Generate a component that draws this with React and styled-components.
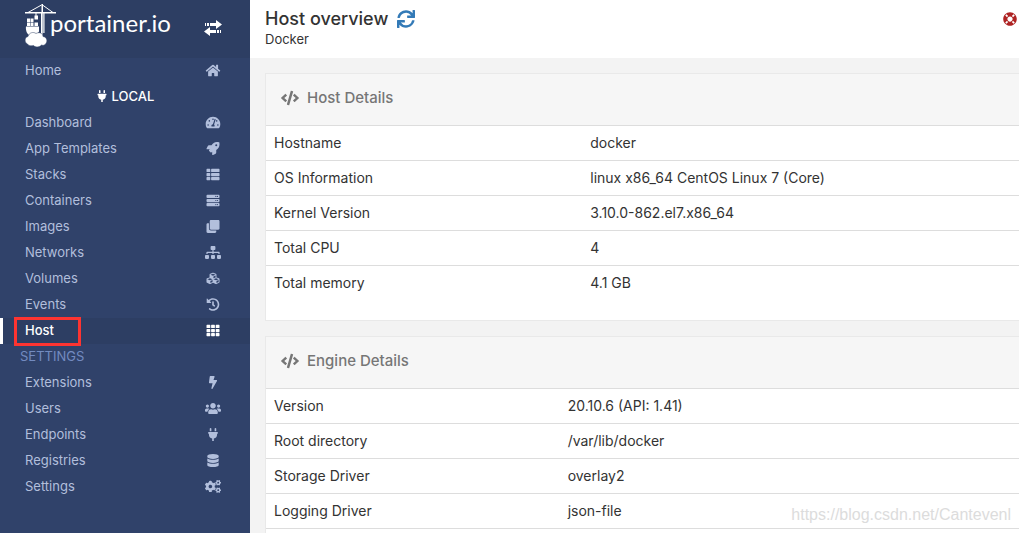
import styled, { createGlobalStyle, css } from 'styled-components'
import {
    FaHome, FaTachometerAlt, FaRocket, FaThList, FaServer, FaClone, FaSitemap, FaCubes, FaHistory,
    FaTh, FaBolt, FaUsers, FaPlug, FaDatabase, FaCogs, FaSync, FaLifeRing, FaCode,
} from 'react-icons/fa'

const GlobalStyle = createGlobalStyle`
    * {
        box-sizing: border-box;
    }
    body {
        margin: 0;
        background-color: #f3f3f3;
        color: #333333;
        font-family: Inter, "Liberation Sans", sans-serif;
        font-size: 13px;
        line-height: 18px;
    }
`

const Page = styled.div`
    display: flex;
    height: 100vh;
    overflow: hidden;
`

const Sidebar = styled.nav`
    flex: 0 0 250px;
    background-color: #30426a;
`

const SidebarHeader = styled.div`
    display: flex;
    align-items: flex-start;
    justify-content: space-between;
    height: 58px;
    padding: 4px 28px 0 25px;
    background-color: #2d3e63;
`

const LogoLink = styled.a`
    display: flex;
    color: white;
    text-decoration: none;
`

const LogoText = styled.span`
    margin-left: -7px;
    font-family: Lato, sans-serif;
    font-size: 24px;
    line-height: 38px;
`

const ToggleButton = styled.button`
    display: flex;
    margin-top: 16px;
    padding: 0;
    border: none;
    background: none;
    color: white;
    cursor: pointer;
`

const Menu = styled.ul`
    margin: 0;
    padding: 0;
    list-style: none;
`

const MenuLink = styled.a`
    display: flex;
    align-items: center;
    justify-content: space-between;
    height: 26px;
    padding: 0 28px 2px 22px;
    border-left: 3px solid transparent;
    color: #b2bfdc;
    text-decoration: none;
    ${({ $active }) => $active && css`
        border-left-color: white;
        background-color: #2d3e63;
        color: white;
        font-weight: 500;
    `}
`

const MenuIcon = styled.span`
    display: flex;
    justify-content: center;
    width: 18px;

    svg {
        width: 16px;
        height: 13px;
    }
`

const Marker = styled.span`
    margin: 3px 0 0 -11px;
    padding: 1px 24px 4px 8px;
    border: 3px solid #fd3431;
    z-index: 1;
`

const EndpointTitle = styled.li`
    display: flex;
    align-items: center;
    justify-content: center;
    gap: 4px;
    height: 26px;
    padding-bottom: 2px;
    color: white;
    font-weight: 500;
`

const SectionTitle = styled.li`
    height: 26px;
    padding-left: 20px;
    color: #738bc0;
    line-height: 24px;
`

const Content = styled.main`
    flex: 1;
    min-width: 0;
`

const PageHeader = styled.header`
    display: flex;
    justify-content: space-between;
    height: 58px;
    padding: 8px 2px 0 15px;
    background-color: white;
`

const PageTitle = styled.h1`
    display: flex;
    align-items: center;
    gap: 9px;
    margin: 0;
    font-size: 18px;
    font-weight: 500;
    line-height: 22px;
`

const RefreshButton = styled.button`
    display: flex;
    padding: 0;
    border: none;
    background: none;
    color: #337ab7;
    cursor: pointer;
`

const HelpLink = styled.a`
    height: 14px;
    margin-top: 4px;
    color: #ae2323;
`

const Widget = styled.section`
    margin: 15px 0 15px 15px;
    border: 1px solid #e9e9e9;
    border-right: none;
    background-color: white;
`

const WidgetTitle = styled.h2`
    display: flex;
    align-items: center;
    gap: 8px;
    height: 51px;
    margin: 0;
    padding: 0 15px 3px;
    background-color: #f6f6f6;
    color: #767676;
    font-size: 15px;
    font-weight: 500;
`

const WidgetBody = styled.div`
    min-height: 195px;
`

const DetailTable = styled.table`
    width: 100%;
    border-collapse: collapse;
    border-bottom: ${({ $closed }) => ($closed ? '1px solid #dddddd' : 'none')};
    font-size: 14px;
    table-layout: fixed;
`

const Cell = styled.td`
    width: ${({ $width }) => $width};
    height: 35px;
    padding: 0 8px;
    border-top: 1px solid #dddddd;
`

const Watermark = styled.div`
    position: absolute;
    right: 8px;
    bottom: 9px;
    color: #dcdcdc;
    font-family: "Liberation Sans", Arial, sans-serif;
    font-size: 16px;
`

const mainLinks = [
    { label: 'Dashboard', icon: FaTachometerAlt },
    { label: 'App Templates', icon: FaRocket },
    { label: 'Stacks', icon: FaThList },
    { label: 'Containers', icon: FaServer },
    { label: 'Images', icon: FaClone },
    { label: 'Networks', icon: FaSitemap },
    { label: 'Volumes', icon: FaCubes },
    { label: 'Events', icon: FaHistory },
    { label: 'Host', icon: FaTh, active: true },
]

const settingsLinks = [
    { label: 'Extensions', icon: FaBolt },
    { label: 'Users', icon: FaUsers },
    { label: 'Endpoints', icon: FaPlug },
    { label: 'Registries', icon: FaDatabase },
    { label: 'Settings', icon: FaCogs },
]

const hostDetails = [
    ['Hostname', 'docker'],
    ['OS Information', 'linux x86_64 CentOS Linux 7 (Core)'],
    ['Kernel Version', '3.10.0-862.el7.x86_64'],
    ['Total CPU', '4'],
    ['Total memory', '4.1 GB'],
]

const engineDetails = [
    ['Version', '20.10.6 (API: 1.41)'],
    ['Root directory', '/var/lib/docker'],
    ['Storage Driver', 'overlay2'],
    ['Logging Driver', 'json-file'],
]

function CraneLogo() {
    return (
        <svg width="32" height="43" viewBox="0 0 32 43" fill="white" aria-hidden="true">
            <path d="M0 8h31v1.5H0z" />
            <path d="M16.500 0h1.500v9h-1.500z" />
            <path d="M16.500 1L3 8.500M17.500 1L28 8.500" stroke="white" strokeWidth="1" fill="none" />
            <path d="M16 9h1.500v22H16zM18.500 9h1v20h-1z" />
            <path d="M17 9h2v20h-2z" opacity="0.4" />
            <path d="M10.500 9h1v3h-1zM9.500 11.500h3.500v4H9.500z" />
            <path d="M2 14.500h3V18H2zM5.500 14.500h3V18h-3zM2 18.500h3v3.500H2zM5.500 18.500h3v3.500h-3zM9.500 18.500H13v3.500H9.500z" />
            <path d="M1 22.500h13v5l-3 4H5c-3-1-4.500-5-4-9z" />
            <path
                d="M2.500 40C-1 38.500-.5 33 3 32.500c1-4 5.500-5 8-3 3.500-2 7 0 7 3 4 .5 5 5 2.500 7.500-1 1.500-2.500 1.500-4 1-2 2.500-6.500 2.500-8 .5-2 .5-5 .5-6-1.500z"
                stroke="#2d3e63"
                strokeWidth="0.500"
            />
        </svg>
    )
}

function TransferIcon() {
    return (
        <svg width="18" height="16" viewBox="0 0 18 16" fill="currentColor" aria-hidden="true">
            <path d="M1 3h1v3H1zM3 3h2v3H3zM6 3h6V0l6 4.500L12 9V6H6z" />
            <path d="M17 10h-1v3h1zM15 10h-2v3h2zM12 10H6V7l-6 4.500L6 16v-3h6z" />
        </svg>
    )
}

function MenuItem({ label, icon: Icon, active }) {
    return (
        <li>
            <MenuLink href="#" $active={active}>
                {active ? <Marker>{label}</Marker> : label}
                <MenuIcon><Icon /></MenuIcon>
            </MenuLink>
        </li>
    )
}

function DetailWidget({ title, rows, labelWidth, closed }) {
    return (
        <Widget>
            <WidgetTitle><FaCode size={18} />{title}</WidgetTitle>
            <WidgetBody>
                <DetailTable $closed={closed}>
                    <tbody>
                        {rows.map(([label, value]) => (
                            <tr key={label}>
                                <Cell $width={labelWidth}>{label}</Cell>
                                <Cell>{value}</Cell>
                            </tr>
                        ))}
                    </tbody>
                </DetailTable>
            </WidgetBody>
        </Widget>
    )
}

export default function App() {
    return (
        <Page>
            <GlobalStyle />
            <Sidebar>
                <SidebarHeader>
                    <LogoLink href="#">
                        <CraneLogo />
                        <LogoText>portainer.io</LogoText>
                    </LogoLink>
                    <ToggleButton aria-label="Toggle sidebar"><TransferIcon /></ToggleButton>
                </SidebarHeader>
                <Menu>
                    <MenuItem label="Home" icon={FaHome} />
                    <EndpointTitle><FaPlug size={12} />LOCAL</EndpointTitle>
                    {mainLinks.map((link) => <MenuItem key={link.label} {...link} />)}
                    <SectionTitle>SETTINGS</SectionTitle>
                    {settingsLinks.map((link) => <MenuItem key={link.label} {...link} />)}
                </Menu>
            </Sidebar>
            <Content>
                <PageHeader>
                    <div>
                        <PageTitle>
                            Host overview
                            <RefreshButton aria-label="Refresh"><FaSync size={18} /></RefreshButton>
                        </PageTitle>
                        Docker
                    </div>
                    <HelpLink href="#" aria-label="Help"><FaLifeRing size={14} /></HelpLink>
                </PageHeader>
                <DetailWidget title="Host Details" rows={hostDetails} labelWidth="42%" />
                <DetailWidget title="Engine Details" rows={engineDetails} labelWidth="39%" closed />
            </Content>
            <Watermark>https://blog.csdn.net/Cantevenl</Watermark>
        </Page>
    )
}
